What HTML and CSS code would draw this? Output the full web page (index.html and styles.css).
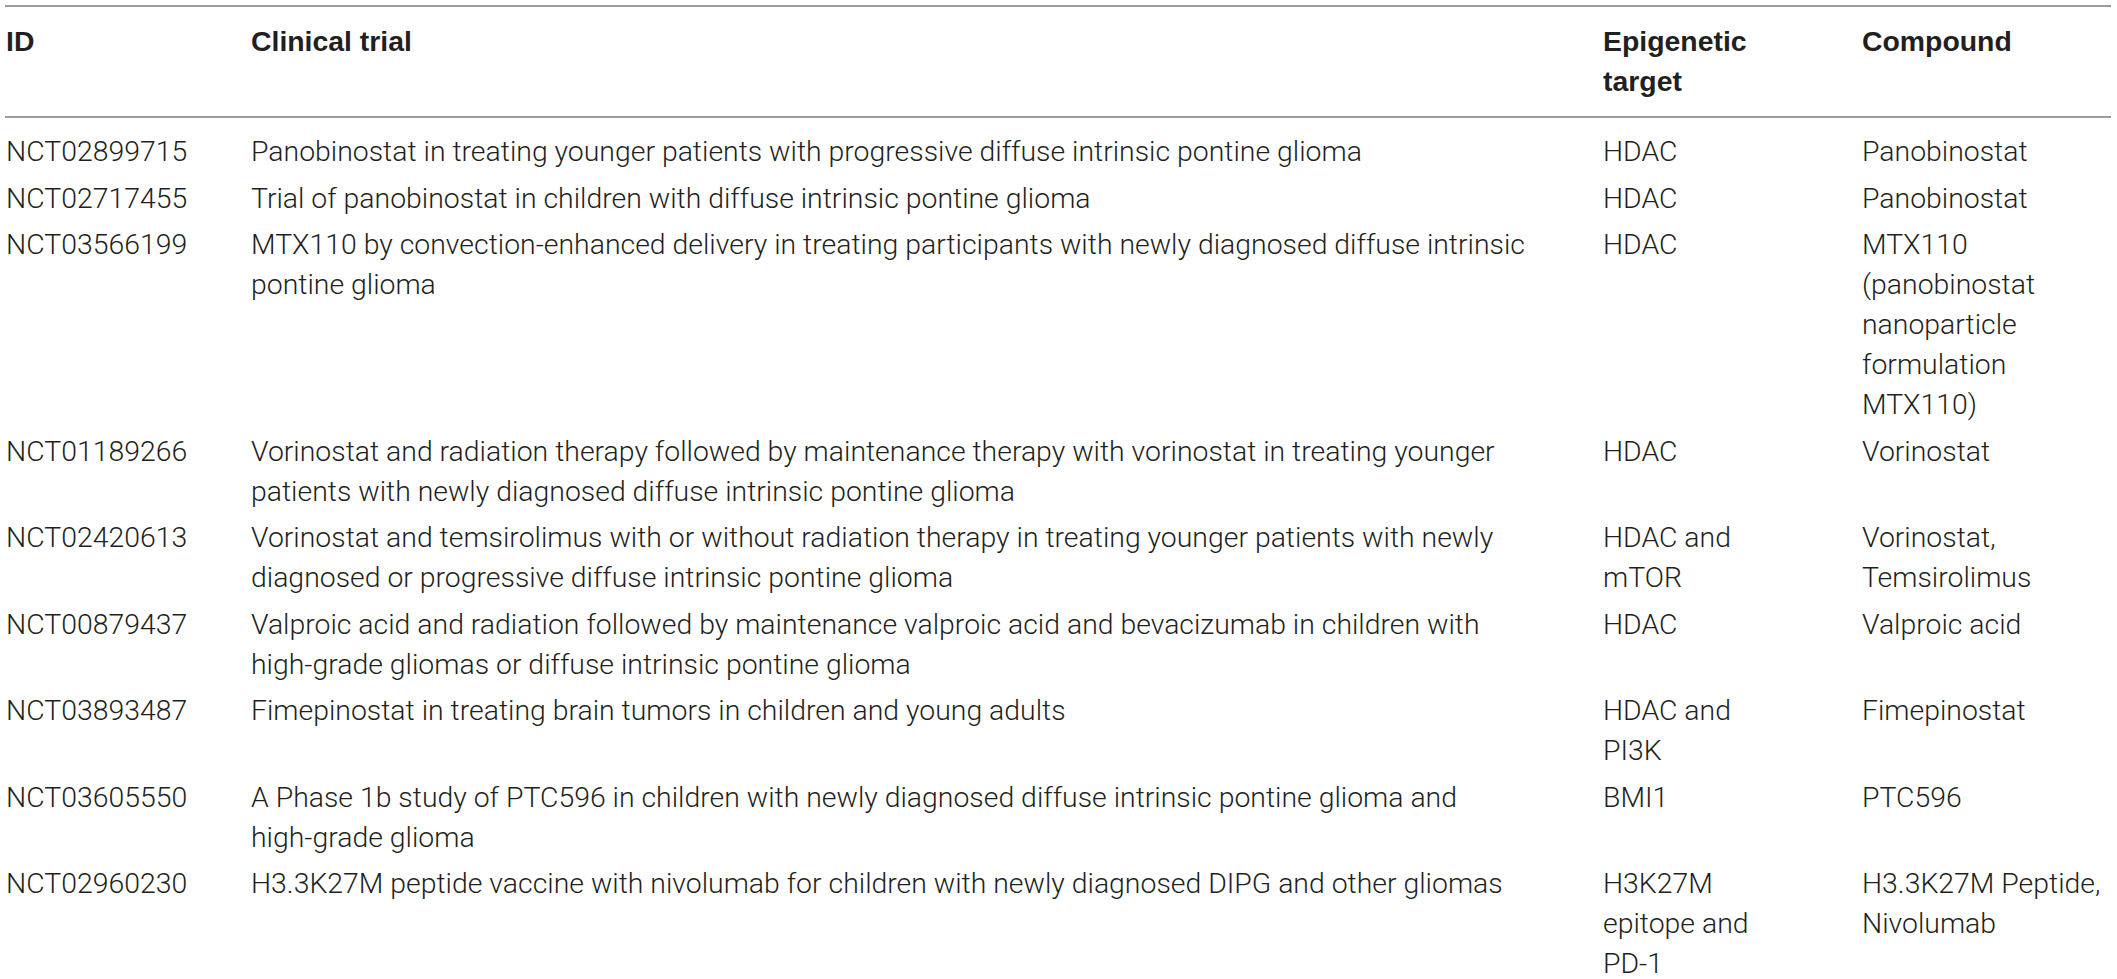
FILE: index.html
```html
<!DOCTYPE html>
<html lang="en">
<head>
<meta charset="utf-8">
<title>Clinical trials</title>
<link rel="stylesheet" href="styles.css">
</head>
<body>
<table class="trials">
  <colgroup>
    <col class="c-id">
    <col class="c-trial">
    <col class="c-target">
    <col class="c-compound">
  </colgroup>
  <thead>
    <tr>
      <th>ID</th>
      <th class="trial">Clinical trial</th>
      <th class="target">Epigenetic target</th>
      <th>Compound</th>
    </tr>
  </thead>
  <tbody>
    <tr>
      <td>NCT02899715</td>
      <td class="trial">Panobinostat in treating younger patients with progressive diffuse intrinsic pontine glioma</td>
      <td class="target">HDAC</td>
      <td>Panobinostat</td>
    </tr>
    <tr>
      <td>NCT02717455</td>
      <td class="trial">Trial of panobinostat in children with diffuse intrinsic pontine glioma</td>
      <td class="target">HDAC</td>
      <td>Panobinostat</td>
    </tr>
    <tr>
      <td>NCT03566199</td>
      <td class="trial">MTX110 by convection-enhanced delivery in treating participants with newly diagnosed diffuse intrinsic pontine glioma</td>
      <td class="target">HDAC</td>
      <td>MTX110 (panobinostat nanoparticle formulation MTX110)</td>
    </tr>
    <tr>
      <td>NCT01189266</td>
      <td class="trial">Vorinostat and radiation therapy followed by maintenance therapy with vorinostat in treating younger patients with newly diagnosed diffuse intrinsic pontine glioma</td>
      <td class="target">HDAC</td>
      <td>Vorinostat</td>
    </tr>
    <tr>
      <td>NCT02420613</td>
      <td class="trial">Vorinostat and temsirolimus with or without radiation therapy in treating younger patients with newly diagnosed or progressive diffuse intrinsic pontine glioma</td>
      <td class="target">HDAC and mTOR</td>
      <td>Vorinostat, Temsirolimus</td>
    </tr>
    <tr>
      <td>NCT00879437</td>
      <td class="trial">Valproic acid and radiation followed by maintenance valproic acid and bevacizumab in children with <span class="nw">high-grade</span> gliomas or diffuse intrinsic pontine glioma</td>
      <td class="target">HDAC</td>
      <td>Valproic acid</td>
    </tr>
    <tr>
      <td>NCT03893487</td>
      <td class="trial">Fimepinostat in treating brain tumors in children and young adults</td>
      <td class="target">HDAC and PI3K</td>
      <td>Fimepinostat</td>
    </tr>
    <tr>
      <td>NCT03605550</td>
      <td class="trial">A Phase 1b study of PTC596 in children with newly diagnosed diffuse intrinsic pontine glioma and <span class="nw">high-grade</span> glioma</td>
      <td class="target">BMI1</td>
      <td>PTC596</td>
    </tr>
    <tr>
      <td>NCT02960230</td>
      <td class="trial">H3.3K27M peptide vaccine with nivolumab for children with newly diagnosed DIPG and other gliomas</td>
      <td class="target">H3K27M epitope and PD-1</td>
      <td>H3.3K27M Peptide, Nivolumab</td>
    </tr>
  </tbody>
</table>
</body>
</html>
```
FILE: styles.css
```css
html, body {
  margin: 0;
  padding: 0;
  background: #ffffff;
}

body {
  font-family: Roboto, "Liberation Sans", Arial, sans-serif;
  font-weight: 300;
  font-size: 28.4px;
  line-height: 40px;
  color: #231f20;
}

.trials {
  margin: 5px 0 0 5px;
  width: 2106px;
  border-collapse: collapse;
  table-layout: fixed;
}

.c-id { width: 245px; }
.c-trial { width: 1352px; }
.c-target { width: 259px; }
.c-compound { width: 250px; }

.trials th,
.trials td {
  text-align: left;
  vertical-align: top;
  padding: 3px 0 3.5px 1px;
}

.trials th {
  font-family: "Liberation Sans", Arial, sans-serif;
  font-weight: 700;
  padding-top: 14px;
  padding-bottom: 15px;
}

.trials thead tr {
  border-top: 2px solid #9c9c9c;
  border-bottom: 2px solid #9c9c9c;
}

.trials tbody tr:first-child td {
  padding-top: 14px;
}

.trials .trial {
  padding-right: 41px;
}

.trials .target {
  padding-right: 94px;
}

.nw {
  white-space: nowrap;
}
```
